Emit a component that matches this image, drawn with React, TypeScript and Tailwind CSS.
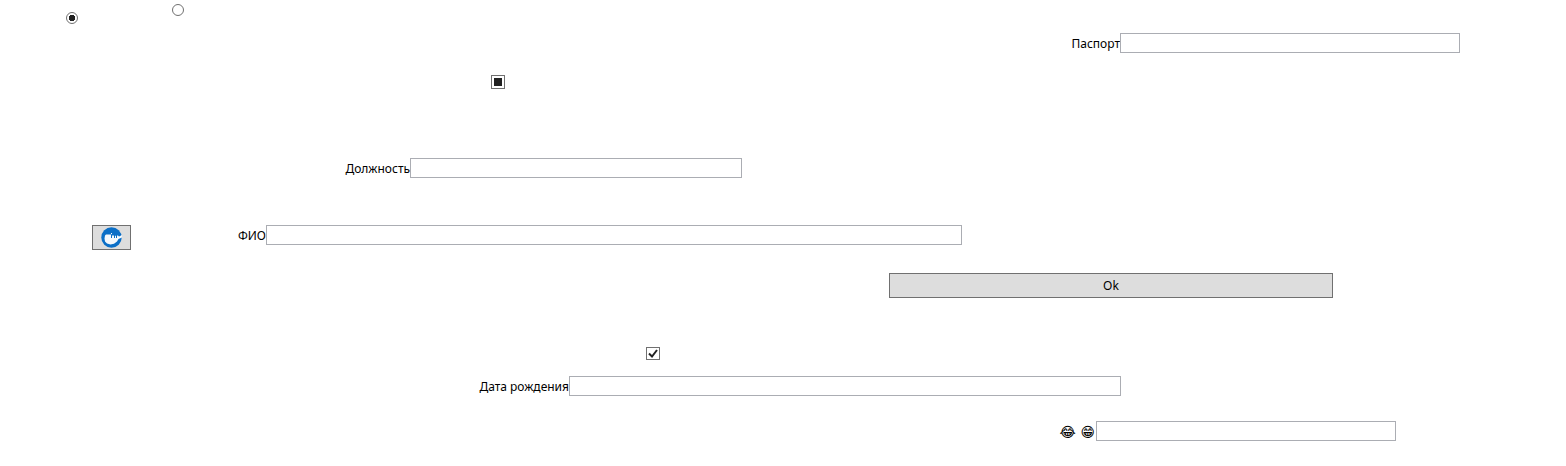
import { ReactNode, useEffect, useRef, useState } from 'react';

const field =
  'h-5 w-full min-w-0 rounded-none border border-[#abadb3] bg-white px-1 text-xs text-black outline-none focus:border-[#569de5]';

function Field({ id, label, columns }: { id: string; label: ReactNode; columns: string }) {
  return (
    <div className={`grid h-5 items-start ${columns}`}>
      <label htmlFor={id} className="justify-self-end whitespace-nowrap leading-[22px]">
        {label}
      </label>
      <input id={id} type="text" className={field} />
    </div>
  );
}

const radio =
  'size-3 appearance-none rounded-full border border-[#707070] bg-white checked:bg-[radial-gradient(circle,#212121_3px,#ffffff_3px)]';

function Logo() {
  return (
    <svg viewBox="0 0 21 21" className="size-[21px]" aria-hidden="true">
      <circle cx="10.5" cy="10.5" r="10.2" fill="#0b6fc7" />
      <path
        d="M4 8.500L5 7.500h5l1 1h6L18 9.500l3-1.500v2.500l-3.500 1.500-1.500 2.500-3 2.200-3.500 .8-3.500-1-2-2-.500-3z"
        fill="#f4f8fc"
      />
      <path d="M10.500 6v1" stroke="#f4f8fc" />
      <path d="M10.500 8v3M13.500 11V8h2v3" fill="none" stroke="#0b6fc7" />
    </svg>
  );
}

export default function App() {
  const partial = useRef<HTMLInputElement>(null);
  const [choice, setChoice] = useState('first');
  const [agreed, setAgreed] = useState(true);

  useEffect(() => {
    if (partial.current) partial.current.indeterminate = true;
  }, []);

  return (
    <form
      className="bg-white pt-1 pb-6 font-['Noto_Sans','Open_Sans',sans-serif] text-xs text-black"
      onSubmit={(e) => e.preventDefault()}
    >
      <div className="grid h-5 grid-cols-[66fr_106fr_1394fr]">
        <input
          type="radio"
          name="choice"
          aria-label="1"
          checked={choice === 'first'}
          onChange={() => setChoice('first')}
          className={`${radio} col-start-2 self-end`}
        />
        <input
          type="radio"
          name="choice"
          aria-label="2"
          checked={choice === 'second'}
          onChange={() => setChoice('second')}
          className={radio}
        />
      </div>

      <div className="mt-[9px]">
        <Field id="passport" label="Паспорт" columns="grid-cols-[1120fr_340fr_106fr]" />
      </div>

      <div className="mt-[22px] grid grid-cols-[491fr_1075fr]">
        <input
          ref={partial}
          type="checkbox"
          aria-label="3"
          className="col-start-2 size-3.5 appearance-none border border-[#707070] bg-white bg-clip-content p-0.5 indeterminate:bg-[#212121]"
        />
      </div>

      <div className="mt-[69px]">
        <Field id="position" label="Должность" columns="grid-cols-[410fr_332fr_824fr]" />
      </div>

      <div className="mt-[47px] grid grid-cols-[92fr_39fr_135fr_696fr_604fr] items-start">
        <button
          type="button"
          aria-label="Logo"
          className="col-start-2 flex h-[25px] items-center justify-center border border-[#707070] bg-[#dddddd]"
        >
          <Logo />
        </button>
        <label htmlFor="name" className="justify-self-end leading-[22px]">
          ФИО
        </label>
        <input id="name" type="text" className={field} />
      </div>

      <div className="mt-[23px] grid grid-cols-[889fr_444fr_233fr]">
        <button type="submit" className="col-start-2 h-[25px] border border-[#707070] bg-[#dddddd]">
          Ok
        </button>
      </div>

      <div className="mt-[49px] grid grid-cols-[646fr_920fr]">
        <label className="col-start-2 grid h-[13px] w-3.5 place-items-center">
          <input
            type="checkbox"
            aria-label="4"
            checked={agreed}
            onChange={(e) => setAgreed(e.target.checked)}
            className="peer col-start-1 row-start-1 h-[13px] w-3.5 appearance-none border border-[#707070] bg-white"
          />
          <svg
            viewBox="0 0 14 13"
            className="pointer-events-none invisible col-start-1 row-start-1 h-[13px] w-3.5 peer-checked:visible"
            aria-hidden="true"
          >
            <path d="M3 6.500l3 3 5-6.500" fill="none" stroke="#212121" strokeWidth="2" />
          </svg>
        </label>
      </div>

      <div className="mt-4">
        <Field id="birth" label="Дата рождения" columns="grid-cols-[569fr_552fr_445fr]" />
      </div>

      <div className="mt-[25px]">
        <Field
          id="mood"
          label={<span className="pr-px font-['DejaVu_Sans',sans-serif] text-sm leading-[22px]">😂 😁</span>}
          columns="grid-cols-[1096fr_300fr_170fr]"
        />
      </div>
    </form>
  );
}
